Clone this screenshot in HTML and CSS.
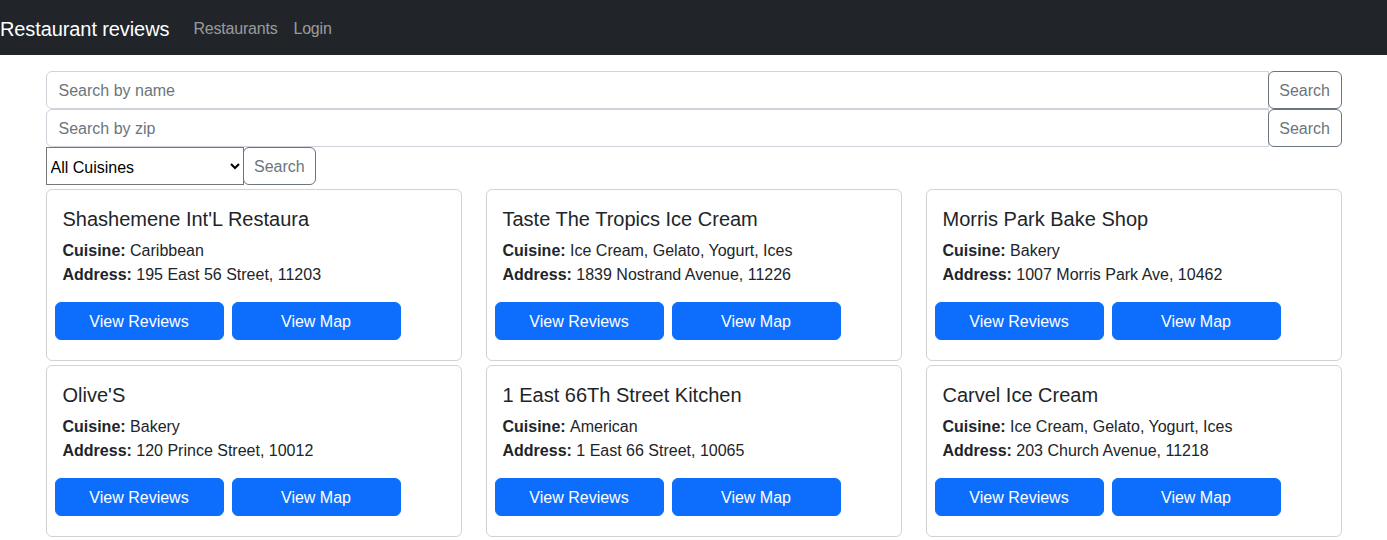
FILE: index.html
```html
<!DOCTYPE html>
<html lang="en">
<head>
<meta charset="utf-8">
<title>Restaurant reviews</title>
<link rel="stylesheet" href="styles.css">
</head>
<body>
<nav class="navbar">
  <a href="#" class="brand">Restaurant reviews</a>
  <div class="nav">
    <a href="#" class="nav-link">Restaurants</a>
    <a href="#" class="nav-link">Login</a>
  </div>
</nav>
<div class="container">
  <div class="input-group">
    <input class="form-control" type="text" placeholder="Search by name">
    <button class="btn-outline">Search</button>
  </div>
  <div class="input-group">
    <input class="form-control" type="text" placeholder="Search by zip">
    <button class="btn-outline">Search</button>
  </div>
  <div class="input-group">
    <select class="cuisine-select">
      <option>All Cuisines</option>
      <option>American</option>
      <option>Bakery</option>
      <option>Caribbean</option>
      <option>Ice Cream, Gelato, Yogurt, Ices</option>
    </select>
    <button class="btn-outline">Search</button>
  </div>
  <div class="cards">
    <div class="card">
      <h5 class="card-title">Shashemene Int'L Restaura</h5>
      <p class="card-text"><strong>Cuisine: </strong>Caribbean<br><strong>Address: </strong>195 East 56 Street, 11203</p>
      <div class="card-actions"><a href="#" class="btn-primary">View Reviews</a><a href="#" class="btn-primary">View Map</a></div>
    </div>
    <div class="card">
      <h5 class="card-title">Taste The Tropics Ice Cream</h5>
      <p class="card-text"><strong>Cuisine: </strong>Ice Cream, Gelato, Yogurt, Ices<br><strong>Address: </strong>1839 Nostrand Avenue, 11226</p>
      <div class="card-actions"><a href="#" class="btn-primary">View Reviews</a><a href="#" class="btn-primary">View Map</a></div>
    </div>
    <div class="card">
      <h5 class="card-title">Morris Park Bake Shop</h5>
      <p class="card-text"><strong>Cuisine: </strong>Bakery<br><strong>Address: </strong>1007 Morris Park Ave, 10462</p>
      <div class="card-actions"><a href="#" class="btn-primary">View Reviews</a><a href="#" class="btn-primary">View Map</a></div>
    </div>
    <div class="card">
      <h5 class="card-title">Olive'S</h5>
      <p class="card-text"><strong>Cuisine: </strong>Bakery<br><strong>Address: </strong>120 Prince Street, 10012</p>
      <div class="card-actions"><a href="#" class="btn-primary">View Reviews</a><a href="#" class="btn-primary">View Map</a></div>
    </div>
    <div class="card">
      <h5 class="card-title">1 East 66Th Street Kitchen</h5>
      <p class="card-text"><strong>Cuisine: </strong>American<br><strong>Address: </strong>1 East 66 Street, 10065</p>
      <div class="card-actions"><a href="#" class="btn-primary">View Reviews</a><a href="#" class="btn-primary">View Map</a></div>
    </div>
    <div class="card">
      <h5 class="card-title">Carvel Ice Cream</h5>
      <p class="card-text"><strong>Cuisine: </strong>Ice Cream, Gelato, Yogurt, Ices<br><strong>Address: </strong>203 Church Avenue, 11218</p>
      <div class="card-actions"><a href="#" class="btn-primary">View Reviews</a><a href="#" class="btn-primary">View Map</a></div>
    </div>
  </div>
</div>
</body>
</html>
```
FILE: styles.css
```css
* { box-sizing: border-box; }
html, body { margin: 0; padding: 0; }
body {
  font-family: "Liberation Sans", Arial, sans-serif;
  font-size: 16px;
  line-height: 1.5;
  color: #212529;
  background: #fff;
}
.navbar {
  display: flex;
  align-items: center;
  height: 55px;
  padding-top: 2px;
  background: #212529;
}
.brand {
  font-size: 20px;
  line-height: 30px;
  letter-spacing: -0.1px;
  color: #fff;
  text-decoration: none;
  margin-right: 16px;
}
.nav { display: flex; }
.nav-link {
  padding: 0 8px;
  color: rgba(255,255,255,.55);
  text-decoration: none;
  line-height: 24px;
  letter-spacing: -0.2px;
}
.container {
  width: 1296px;
  margin: 16px auto 0;
}
.input-group {
  display: flex;
  align-items: stretch;
}
.form-control {
  flex: 1 1 auto;
  min-width: 0;
  height: 38px;
  padding: 7px 12px 5px;
  font: inherit;
  color: #212529;
  border: 1px solid #ced4da;
  border-radius: 6px 0 0 6px;
  background: #fff;
  outline: none;
}
.form-control::placeholder { color: #6c757d; }
.btn-outline {
  margin-left: -1px;
  height: 38px;
  padding: 7px 10.5px 5px;
  font: inherit;
  line-height: 24px;
  color: #6c757d;
  background: transparent;
  border: 1px solid #6c757d;
  border-radius: 6px;
}
.cuisine-select {
  width: 198px;
  height: 38px;
  font: inherit;
  color: #000;
  border: 1px solid #767676;
  border-radius: 0;
  background: #fff;
  padding: 2px 0 0 0;
}
.cards {
  display: grid;
  grid-template-columns: repeat(3, 1fr);
  column-gap: 24px;
  row-gap: 4px;
  margin-top: 4px;
}
.card {
  border: 1px solid rgba(0,0,0,.175);
  border-radius: 6px;
  padding: 16px;
}
.card-title {
  margin: 0 0 7px;
  padding-top: 1px;
  font-size: 20px;
  font-weight: 400;
  line-height: 24px;
}
.card-text {
  margin: 0 0 15px;
  padding-top: 1px;
}
.card-text strong { font-weight: 700; }
.card-actions {
  display: flex;
  gap: 8px;
  margin: 0 -8px 4px;
}
.btn-primary {
  display: block;
  width: 169px;
  height: 38px;
  line-height: 24px;
  padding: 7px 12px 5px;
  text-align: center;
  color: #fff;
  background: #0d6efd;
  border: 1px solid #0d6efd;
  border-radius: 6px;
  text-decoration: none;
}
```
